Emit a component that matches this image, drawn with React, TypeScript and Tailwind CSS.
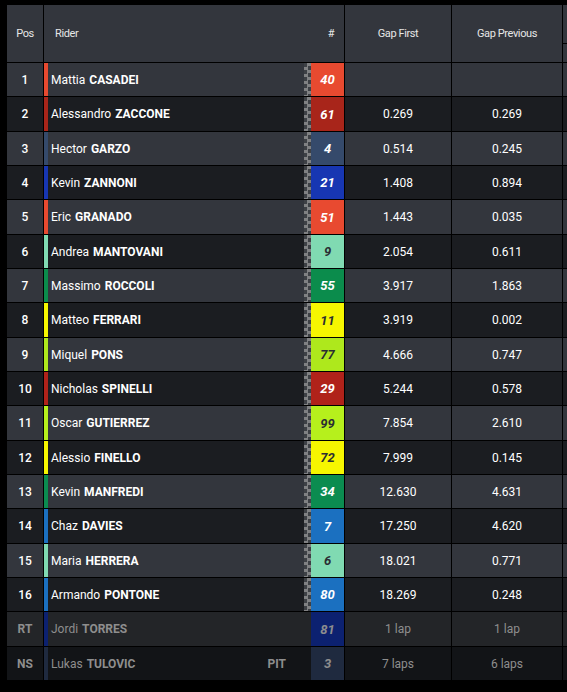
import React from "react";

type Row = {
  pos: string;
  first: string;
  last: string;
  num: string;
  color: string;
  dark?: boolean;
  gf: string;
  gp: string;
  status?: "rt" | "ns";
  pit?: boolean;
};

const rows: Row[] = [
  { pos: "1", first: "Mattia", last: "CASADEI", num: "40", color: "#e84a30", gf: "", gp: "" },
  { pos: "2", first: "Alessandro", last: "ZACCONE", num: "61", color: "#a8251a", gf: "0.269", gp: "0.269" },
  { pos: "3", first: "Hector", last: "GARZO", num: "4", color: "#354a6b", gf: "0.514", gp: "0.245" },
  { pos: "4", first: "Kevin", last: "ZANNONI", num: "21", color: "#1736b2", gf: "1.408", gp: "0.894" },
  { pos: "5", first: "Eric", last: "GRANADO", num: "51", color: "#e84a30", gf: "1.443", gp: "0.035" },
  { pos: "6", first: "Andrea", last: "MANTOVANI", num: "9", color: "#80dab2", dark: true, gf: "2.054", gp: "0.611" },
  { pos: "7", first: "Massimo", last: "ROCCOLI", num: "55", color: "#0b8c4c", gf: "3.917", gp: "1.863" },
  { pos: "8", first: "Matteo", last: "FERRARI", num: "11", color: "#f6f600", dark: true, gf: "3.919", gp: "0.002" },
  { pos: "9", first: "Miquel", last: "PONS", num: "77", color: "#aee81c", dark: true, gf: "4.666", gp: "0.747" },
  { pos: "10", first: "Nicholas", last: "SPINELLI", num: "29", color: "#b0221a", gf: "5.244", gp: "0.578" },
  { pos: "11", first: "Oscar", last: "GUTIERREZ", num: "99", color: "#b6f01c", dark: true, gf: "7.854", gp: "2.610" },
  { pos: "12", first: "Alessio", last: "FINELLO", num: "72", color: "#f6f600", dark: true, gf: "7.999", gp: "0.145" },
  { pos: "13", first: "Kevin", last: "MANFREDI", num: "34", color: "#0b8c50", gf: "12.630", gp: "4.631" },
  { pos: "14", first: "Chaz", last: "DAVIES", num: "7", color: "#1b70c0", gf: "17.250", gp: "4.620" },
  { pos: "15", first: "Maria", last: "HERRERA", num: "6", color: "#80dab2", dark: true, gf: "18.021", gp: "0.771" },
  { pos: "16", first: "Armando", last: "PONTONE", num: "80", color: "#1b70c0", gf: "18.269", gp: "0.248" },
  { pos: "RT", first: "Jordi", last: "TORRES", num: "81", color: "#0c2170", gf: "1 lap", gp: "1 lap", status: "rt" },
  { pos: "NS", first: "Lukas", last: "TULOVIC", num: "3", color: "#1f2a3f", gf: "7 laps", gp: "6 laps", status: "ns", pit: true },
];

export default function App() {
  return (
    <div
      className="w-[567px] h-[692px] bg-black overflow-hidden pl-[7px] pt-[5px]"
      style={{ fontFamily: "Roboto, 'Liberation Sans', sans-serif" }}
    >
      <div className="grid grid-cols-[36px_300px_106px_110px_40px] gap-px bg-black">
        {/* header */}
        <div className="h-[57px] bg-[#33363d] flex items-center justify-center pt-[2px] text-[11px] tracking-[-0.4px] text-[#e6e6e6]">Pos</div>
        <div className="h-[57px] bg-[#33363d] flex items-center pt-[2px] text-[11px] tracking-[-0.4px] text-[#e6e6e6] pl-[11px] pr-[10px]">
          <span className="flex-1">Rider</span>
          <span>#</span>
        </div>
        <div className="h-[57px] bg-[#33363d] flex items-center justify-center pt-[2px] text-[11px] tracking-[-0.4px] text-[#e6e6e6]">Gap First</div>
        <div className="h-[57px] bg-[#33363d] flex items-center justify-center pt-[2px] text-[11px] tracking-[-0.4px] text-[#e6e6e6]">Gap Previous</div>
        <div className="h-[57px] flex flex-col gap-px">
          <div className="h-[38px] bg-[#33363d]" />
          <div className="flex-1 bg-[#33363d]" />
        </div>

        {rows.map((r, i) => {
          const bg =
            r.status === "rt"
              ? "bg-[#232528]"
              : r.status === "ns"
              ? "bg-[#121417]"
              : i % 2 === 0
              ? "bg-[#33363d]"
              : "bg-[#1b1d21]";
          const gray = !!r.status;
          const txt = gray ? "text-[#8e8e8e]" : "text-white";
          return (
            <React.Fragment key={r.pos}>
              <div className={`h-[33.33px] ${bg} flex items-center justify-center pt-[1px] text-[12px] ${gray ? "font-bold" : "font-medium"} ${txt}`}>
                {r.pos}
              </div>
              <div className={`h-[33.33px] ${bg} flex items-stretch`}>
                <div className="w-[4px] shrink-0" style={{ backgroundColor: r.color }} />
                <div className={`flex-1 flex items-center pl-[3px] pt-[1px] text-[12px] ${txt}`}>
                  <span>{r.first}</span>
                  <span className="font-bold ml-[4px]">{r.last}</span>
                </div>
                {r.pit && (
                  <div className="flex items-center pt-[1px] pr-[18px] text-[12px] font-bold text-[#8e8e8e]">PIT</div>
                )}
                <div
                  className={`w-[7px] shrink-0 ${
                    gray ? "" : "bg-[repeating-conic-gradient(#808183_0%_25%,#3d4045_0%_50%)] bg-[length:7px_7px]"
                  }`}
                />
                <div
                  className={`w-[33px] shrink-0 flex items-center justify-center pt-[1px] text-[13px] font-bold italic ${
                    gray ? "text-[#8e8e8e]" : r.dark ? "text-[#2a2d33]" : "text-white"
                  }`}
                  style={{ backgroundColor: r.color }}
                >
                  {r.num}
                </div>
              </div>
              <div className={`h-[33.33px] ${bg} flex items-center justify-center pt-[1px] text-[12px] ${txt}`}>{r.gf}</div>
              <div className={`h-[33.33px] ${bg} flex items-center justify-center pt-[1px] text-[12px] ${txt}`}>{r.gp}</div>
              <div className={`h-[33.33px] ${bg}`} />
            </React.Fragment>
          );
        })}
      </div>
    </div>
  );
}
